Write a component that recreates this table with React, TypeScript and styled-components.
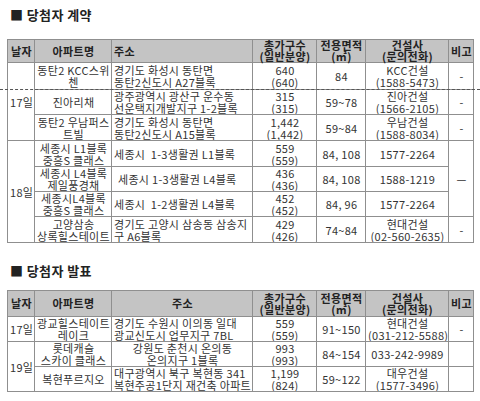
import React from 'react';
import styled, { createGlobalStyle } from 'styled-components';

const GlobalStyle = createGlobalStyle`
  html, body {
    margin: 0;
    padding: 0;
    background: #ffffff;
  }
  body {
    font-family: 'Noto Sans CJK KR', 'Noto Sans', sans-serif;
    color: #333333;
  }
`;

type Lines = string | string[];

interface CellData {
  text: Lines;
  rowSpan?: number;
  align?: 'left' | 'center';
  indent?: number;
}

type RowData = (CellData | null)[];

const Page = styled.div`
  position: relative;
  width: 480px;
  height: 401px;
  padding-top: 8px;
  box-sizing: border-box;
  overflow: hidden;
`;

const Title = styled.h2<{ $top: number; $gap: number }>`
  margin: ${props => props.$top}px 0 ${props => props.$gap}px 10px;
  font-size: 13px;
  line-height: 14px;
  font-weight: 700;
  color: #222222;
  letter-spacing: 0.4px;
`;

const Table = styled.table`
  width: 466px;
  margin-left: 7px;
  border-collapse: collapse;
  table-layout: fixed;
  border: 1px solid #8f8f8f;
`;

const Row = styled.tr<{ $height: number }>`
  height: ${props => props.$height}px;
`;

const HeadCell = styled.th<{ $align?: 'left' | 'center' }>`
  background: #c4c4c4;
  border: 1px solid #8f8f8f;
  padding: 0 1px 0 2px;
  font-size: 11px;
  line-height: 11px;
  font-weight: 700;
  color: #222222;
  text-align: ${props => props.$align ?? 'center'};
  white-space: nowrap;
  letter-spacing: 0.4px;
`;

const Cell = styled.td<{ $align?: 'left' | 'center'; $indent?: number }>`
  border: 1px solid #8f8f8f;
  padding: 0 1px 0 ${props => 2 + (props.$indent ?? 0)}px;
  font-size: 11px;
  line-height: 12px;
  letter-spacing: 0.3px;
  text-align: ${props => props.$align ?? 'center'};
  vertical-align: middle;
  white-space: nowrap;
  overflow: hidden;
`;

const DashedRule = styled.div<{ $top: number }>`
  position: absolute;
  left: 0;
  right: 0;
  top: ${props => props.$top}px;
  border-top: 1px dashed #555555;
`;

const colWidths = [27, 77, 141, 64, 49, 83, 25];

const renderLines = (text: Lines) => {
  const arr = Array.isArray(text) ? text : [text];
  return arr.map((line, i) => (
    <React.Fragment key={i}>
      {i > 0 && <br />}
      {line}
    </React.Fragment>
  ));
};

const contractRows: { height: number; cells: RowData }[] = [
  {
    height: 27,
    cells: [
      { text: '17일', rowSpan: 3 },
      { text: ['동탄2 KCC스위', '첸'] },
      { text: ['경기도 화성시 동탄면', '동탄2신도시 A27블록'], align: 'left' },
      { text: ['640', '(640)'] },
      { text: '84' },
      { text: ['KCC건설', '(1588-5473)'] },
      { text: '-' },
    ],
  },
  {
    height: 25,
    cells: [
      null,
      { text: '진아리채' },
      { text: ['광주광역시 광산구 운수동', '선운택지개발지구 1-2블록'], align: 'left' },
      { text: ['315', '(315)'] },
      { text: '59~78' },
      { text: ['진아건설', '(1566-2105)'] },
      { text: '-' },
    ],
  },
  {
    height: 26,
    cells: [
      null,
      { text: ['동탄2 우남퍼스', '트빌'] },
      { text: ['경기도 화성시 동탄면', '동탄2신도시 A15블록'], align: 'left' },
      { text: ['1,442', '(1,442)'] },
      { text: '59~84' },
      { text: ['우남건설', '(1588-8034)'] },
      { text: '-' },
    ],
  },
  {
    height: 26,
    cells: [
      { text: '18일', rowSpan: 4 },
      { text: ['세종시 L1블록', '중흥S 클래스'] },
      { text: '세종시\u00a0\u00a01-3생활권 L1블록', align: 'left' },
      { text: ['559', '(559)'] },
      { text: '84, 108' },
      { text: '1577-2264' },
      { text: '—', rowSpan: 3 },
    ],
  },
  {
    height: 25,
    cells: [
      null,
      { text: ['세종시 L4블록', '제일풍경채'] },
      { text: '세종시 1-3생활권 L4블록', align: 'left', indent: 4 },
      { text: ['436', '(436)'] },
      { text: '84, 108' },
      { text: '1588-1219' },
      null,
    ],
  },
  {
    height: 25,
    cells: [
      null,
      { text: ['세종시L4블록', '중흥S 클래스'] },
      { text: '세종시\u00a0\u00a01-2생활권 L4블록', align: 'left' },
      { text: ['452', '(452)'] },
      { text: '84, 96' },
      { text: '1577-2264' },
      null,
    ],
  },
  {
    height: 26,
    cells: [
      null,
      { text: ['고양삼송', '상록힐스테이트'] },
      { text: ['경기도 고양시 삼송동 삼송지', '구 A6블록'], align: 'left' },
      { text: ['429', '(426)'] },
      { text: '74~84' },
      { text: ['현대건설', '(02-560-2635)'] },
      { text: '-' },
    ],
  },
];

const announceRows: { height: number; cells: RowData }[] = [
  {
    height: 25,
    cells: [
      { text: '17일' },
      { text: ['광교힐스테이트', '레이크'] },
      { text: ['경기도 수원시 이의동 일대', '광교신도시 업무지구 7BL'], align: 'left' },
      { text: ['559', '(559)'] },
      { text: '91~150' },
      { text: ['현대건설', '(031-212-5588)'] },
      { text: '-' },
    ],
  },
  {
    height: 25,
    cells: [
      { text: '19일', rowSpan: 2 },
      { text: ['롯데캐슬', '스카이 클래스'] },
      { text: ['강원도 춘천시 온의동', '온의지구 1블록'] },
      { text: ['993', '(993)'] },
      { text: '84~154' },
      { text: '033-242-9989' },
      { text: '' },
    ],
  },
  {
    height: 25,
    cells: [
      null,
      { text: '복현푸르지오' },
      { text: ['대구광역시 북구 복현동 341', '복현주공1단지 재건축 아파트'], align: 'left' },
      { text: ['1,199', '(824)'] },
      { text: '59~122' },
      { text: ['대우건설', '(1577-3496)'] },
      { text: '' },
    ],
  },
];

interface TableProps {
  headerHeight: number;
  addressAlign: 'left' | 'center';
  rows: { height: number; cells: RowData }[];
}

const ScheduleTable: React.FC<TableProps> = ({ headerHeight, addressAlign, rows }) => (
  <Table>
    <colgroup>
      {colWidths.map((w, i) => (
        <col key={i} style={{ width: w }} />
      ))}
    </colgroup>
    <thead>
      <Row $height={headerHeight}>
        <HeadCell>날자</HeadCell>
        <HeadCell>아파트명</HeadCell>
        <HeadCell $align={addressAlign}>주소</HeadCell>
        <HeadCell>총가구수<br />(일반분양)</HeadCell>
        <HeadCell>전용면적<br />(㎡)</HeadCell>
        <HeadCell>건설사<br />(문의전화)</HeadCell>
        <HeadCell>비고</HeadCell>
      </Row>
    </thead>
    <tbody>
      {rows.map((row, r) => (
        <Row key={r} $height={row.height}>
          {row.cells.map((cell, c) =>
            cell ? (
              <Cell key={c} rowSpan={cell.rowSpan} $align={cell.align} $indent={cell.indent}>
                {renderLines(cell.text)}
              </Cell>
            ) : null
          )}
        </Row>
      ))}
    </tbody>
  </Table>
);

export default function App() {
  return (
    <>
      <GlobalStyle />
      <Page>
        <Title $top={0} $gap={17}>■ 당첨자 계약</Title>
        <ScheduleTable headerHeight={23} addressAlign="left" rows={contractRows} />
        <Title $top={21} $gap={12}>■ 당첨자 발표</Title>
        <ScheduleTable headerHeight={26} addressAlign="center" rows={announceRows} />
        <DashedRule $top={89} />
      </Page>
    </>
  );
}
